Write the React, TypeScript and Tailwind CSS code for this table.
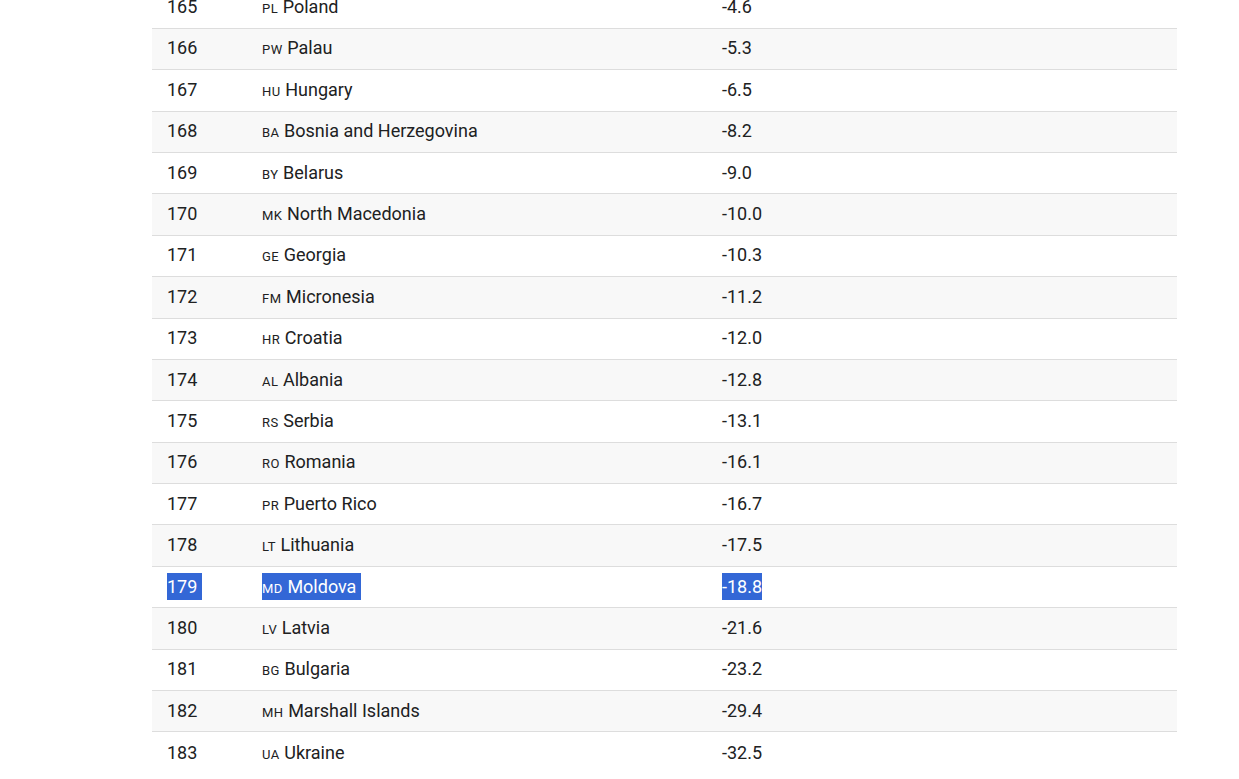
const rows: [number, string, string, string][] = [
  [165, "pl", "Poland", "-4.6"],
  [166, "pw", "Palau", "-5.3"],
  [167, "hu", "Hungary", "-6.5"],
  [168, "ba", "Bosnia and Herzegovina", "-8.2"],
  [169, "by", "Belarus", "-9.0"],
  [170, "mk", "North Macedonia", "-10.0"],
  [171, "ge", "Georgia", "-10.3"],
  [172, "fm", "Micronesia", "-11.2"],
  [173, "hr", "Croatia", "-12.0"],
  [174, "al", "Albania", "-12.8"],
  [175, "rs", "Serbia", "-13.1"],
  [176, "ro", "Romania", "-16.1"],
  [177, "pr", "Puerto Rico", "-16.7"],
  [178, "lt", "Lithuania", "-17.5"],
  [179, "md", "Moldova", "-18.8"],
  [180, "lv", "Latvia", "-21.6"],
  [181, "bg", "Bulgaria", "-23.2"],
  [182, "mh", "Marshall Islands", "-29.4"],
  [183, "ua", "Ukraine", "-32.5"],
];

export default function App() {
  return (
    <div
      className="h-[779px] overflow-hidden bg-white text-[18px] leading-[27px] text-[#202122]"
      style={{ fontFamily: "Roboto, 'Liberation Sans', sans-serif" }}
    >
      <div className="ml-[152px] -mt-[12.6px] w-[1025px]">
        {rows.map(([rank, code, name, value], i) => {
          const selected = rank === 179;
          const hl = selected ? "bg-[#3367d6] text-white" : "";
          const trail = selected ? "pr-[5px]" : "";
          return (
            <div
              key={rank}
              className={`grid h-[41.4px] grid-cols-[95px_460px_1fr] items-center px-[15px] pb-[2px] ${
                i < rows.length - 1 ? "border-b border-[#dddddd]" : ""
              } ${i % 2 === 1 ? "bg-[#f8f8f8]" : "bg-white"}`}
            >
              <div className="flex">
                <span className={`inline-block leading-[27px] ${hl} ${trail}`}>{rank}</span>
              </div>
              <div className="flex">
                <span className={`inline-block whitespace-nowrap leading-[27px] ${hl} ${trail}`}>
                  <span className="text-[13px] leading-none tracking-[0.04em] uppercase">{code}</span> {name}
                </span>
              </div>
              <div className="flex">
                <span className={`inline-block leading-[27px] ${hl}`}>{value}</span>
              </div>
            </div>
          );
        })}
      </div>
    </div>
  );
}
